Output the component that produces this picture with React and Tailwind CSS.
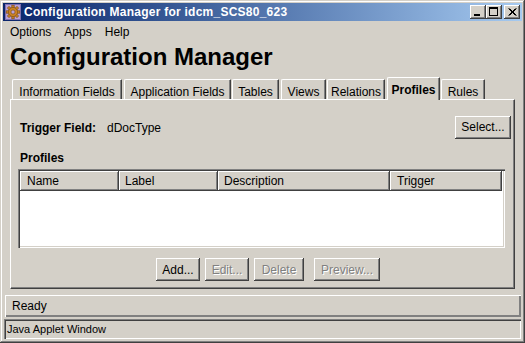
const raised =
  "shadow-[inset_-1px_-1px_#404040,inset_1px_1px_#ffffff,inset_-2px_-2px_#808080,inset_2px_2px_#d4d0c8]";

function WinButton({ children, className = "" }) {
  return (
    <div className={"w-[16px] h-[14px] bg-[#d4d0c8] " + raised + " " + className}>
      <svg width="16" height="14" viewBox="0 0 16 14" className="block">
        {children}
      </svg>
    </div>
  );
}

function Tab({ label, w, ml, selected }) {
  if (selected) {
    return (
      <div
        className={
          "relative z-10 -mb-[1px] h-[23px] flex items-end justify-center pb-[4px] leading-[12px] font-bold bg-[#d4d0c8] border-t border-l border-t-white border-l-white border-r border-r-[#404040] rounded-tl-[2px] rounded-tr-[1px] shadow-[inset_-1px_0_#808080] " +
          w +
          " " +
          ml
        }
      >
        {label}
      </div>
    );
  }
  return (
    <div
      className={
        "h-[20px] flex items-end justify-center pb-[1px] leading-[12px] bg-[#d4d0c8] border-t border-l border-t-white border-l-white border-r border-r-[#404040] rounded-tl-[2px] rounded-tr-[1px] shadow-[inset_-1px_0_#808080] " +
        w +
        " " +
        ml
      }
    >
      {label}
    </div>
  );
}

function Btn({ label, w, ml, disabled }) {
  return (
    <div
      className={
        "h-[23px] flex items-center justify-center leading-[16px] bg-[#d4d0c8] " +
        raised +
        " " +
        w +
        " " +
        ml +
        (disabled ? " text-[#808080] [text-shadow:1px_1px_0_#ffffff]" : " text-black")
      }
    >
      {label}
    </div>
  );
}

export default function App() {
  return (
    <div className="w-[525px] h-[343px] overflow-hidden bg-[#d4d0c8] p-[3px] flex flex-col text-[12px] text-black font-['Liberation_Sans',Arial,sans-serif] shadow-[inset_-1px_-1px_#404040,inset_1px_1px_#d4d0c8,inset_-2px_-2px_#808080,inset_2px_2px_#ffffff]">
      {/* Title bar */}
      <div className="h-[18px] shrink-0 flex items-center bg-linear-to-r from-[#0a246a] to-[#a6caf0]">
        <svg width="16" height="16" viewBox="0 0 16 16" className="ml-[2px] block shrink-0">
          <rect x="0" y="0" width="16" height="16" fill="#b8a0d8" />
          <rect x="0.5" y="0.5" width="15" height="15" fill="none" stroke="#8070b0" />
          <g fill="#c98224" stroke="#7a4a10" strokeWidth="0.6">
            <rect x="6.8" y="1.2" width="2.4" height="3" transform="rotate(0 8 8)" />
            <rect x="6.8" y="1.2" width="2.4" height="3" transform="rotate(45 8 8)" />
            <rect x="6.8" y="1.2" width="2.4" height="3" transform="rotate(90 8 8)" />
            <rect x="6.8" y="1.2" width="2.4" height="3" transform="rotate(135 8 8)" />
            <rect x="6.8" y="1.2" width="2.4" height="3" transform="rotate(180 8 8)" />
            <rect x="6.8" y="1.2" width="2.4" height="3" transform="rotate(225 8 8)" />
            <rect x="6.8" y="1.2" width="2.4" height="3" transform="rotate(270 8 8)" />
            <rect x="6.8" y="1.2" width="2.4" height="3" transform="rotate(315 8 8)" />
            <circle cx="8" cy="8" r="4.6" />
          </g>
          <circle cx="8" cy="8" r="2" fill="#b8a0d8" stroke="#7a4a10" strokeWidth="0.6" />
        </svg>
        <span className="ml-[3px] text-white font-bold text-[12px] tracking-[0.25px] leading-[18px] whitespace-nowrap">
          Configuration Manager for idcm_SCS80_623
        </span>
        <div className="ml-auto mr-[2px] flex">
          <WinButton>
            <rect x="4" y="9" width="6" height="2" fill="#000" />
          </WinButton>
          <WinButton>
            <rect x="3.5" y="2.5" width="8" height="8" fill="none" stroke="#000" />
            <rect x="3" y="2" width="9" height="2" fill="#000" />
          </WinButton>
          <WinButton className="ml-[2px]">
            <path d="M4.5 3.5 L11.5 10.5 M5.5 3.5 L12.5 10.5 M11.5 3.5 L4.5 10.5 M12.5 3.5 L5.5 10.5" stroke="#000" strokeWidth="1" fill="none" />
          </WinButton>
        </div>
      </div>

      {/* Menu bar */}
      <div className="h-[20px] shrink-0 flex pl-[7px] gap-[13px] pt-[3px] leading-[16px]">
        <span>Options</span>
        <span>Apps</span>
        <span>Help</span>
      </div>

      {/* Heading */}
      <div className="mt-[2px] ml-[7px] text-[24px] font-bold leading-[28px] whitespace-nowrap">
        Configuration Manager
      </div>

      {/* Tabs */}
      <div className="mt-[6px] h-[22px] shrink-0 flex items-end pl-[9px] whitespace-nowrap">
        <Tab label="Information Fields" w="w-[110px]" ml="" />
        <Tab label="Application Fields" w="w-[107px]" ml="ml-[2px]" />
        <Tab label="Tables" w="w-[47px]" ml="ml-[1px]" />
        <Tab label="Views" w="w-[45px]" ml="ml-[2px]" />
        <Tab label="Relations" w="w-[58px]" ml="ml-[1px]" />
        <Tab label="Profiles" w="w-[53px]" ml="ml-[2px]" selected />
        <Tab label="Rules" w="w-[44px]" ml="ml-[1px]" />
      </div>

      {/* Panel */}
      <div className="mx-[7px] h-[190px] shrink-0 flex flex-col border border-t-white border-l-white border-r-[#404040] border-b-[#404040] shadow-[inset_-1px_-1px_#808080] pt-[16px] pl-[7px] pr-[9px]">
        <div className="h-[22px] flex items-center">
          <span className="ml-[2px] pt-[1px] w-[87px] font-bold leading-[16px]">Trigger Field:</span>
          <span className="pt-[1px] leading-[16px]">dDocType</span>
          <div className="ml-auto -mr-[6px]">
            <Btn label="Select..." w="w-[56px]" ml="" />
          </div>
        </div>
        <div className="mt-[12px] ml-[2px] font-bold leading-[16px]">Profiles</div>
        <div className="mt-[3px] h-[79px] flex flex-col p-[2px] bg-white shadow-[inset_1px_1px_#808080,inset_2px_2px_#404040,inset_-1px_-1px_#ffffff,inset_-2px_-2px_#d4d0c8]">
          <div className="h-[20px] shrink-0 flex">
            <div className={"w-[99px] h-[20px] flex items-center pl-[7px] leading-[16px] bg-[#d4d0c8] " + raised}>Name</div>
            <div className={"w-[99px] h-[20px] flex items-center pl-[6px] leading-[16px] bg-[#d4d0c8] " + raised}>Label</div>
            <div className={"w-[172px] h-[20px] flex items-center pl-[6px] leading-[16px] bg-[#d4d0c8] " + raised}>Description</div>
            <div className={"w-[112px] h-[20px] flex items-center pl-[7px] leading-[16px] bg-[#d4d0c8] " + raised}>Trigger</div>
          </div>
          <div className="flex-1 bg-white" />
        </div>
        <div className="mt-[10px] flex pl-[138px]">
          <Btn label="Add..." w="w-[44px]" ml="" />
          <Btn label="Edit..." w="w-[44px]" ml="ml-[5px]" disabled />
          <Btn label="Delete" w="w-[50px]" ml="ml-[5px]" disabled />
          <Btn label="Preview..." w="w-[66px]" ml="ml-[10px]" disabled />
        </div>
      </div>

      {/* Status bar */}
      <div className="mt-[6px] ml-[2px] mr-[1px] h-[22px] shrink-0 flex items-center pl-[7px] leading-[16px] shadow-[inset_1px_1px_#ffffff,inset_-1px_-1px_#808080,inset_-2px_-2px_#808080]">
        Ready
      </div>

      {/* Applet window */}
      <div className="mt-[2px] ml-[1px] mr-[1px] h-[20px] shrink-0 flex items-center pl-[3px] text-[11px] leading-[14px] shadow-[inset_1px_1px_#808080,inset_2px_2px_#404040,inset_-1px_-1px_#ffffff,inset_-2px_-2px_#d4d0c8]">
        Java Applet Window
      </div>
    </div>
  );
}
